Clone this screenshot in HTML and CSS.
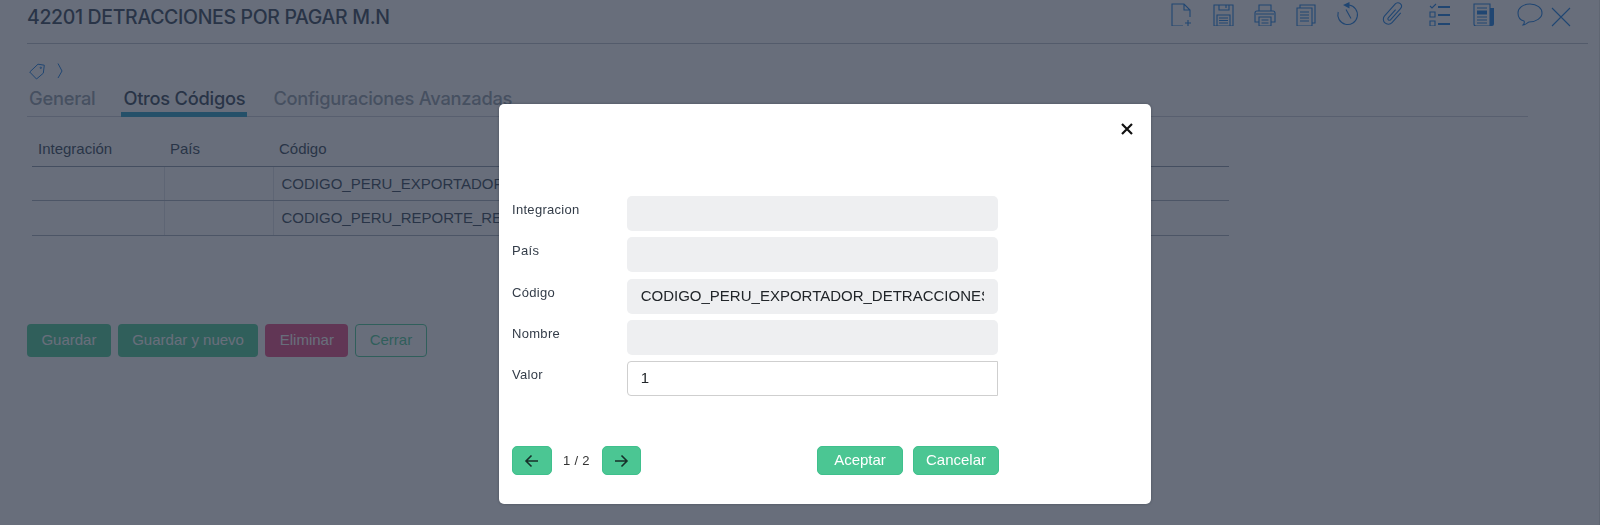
FILE: index.html
```html
<!DOCTYPE html>
<html lang="es">
<head>
<meta charset="utf-8">
<title>42201 DETRACCIONES POR PAGAR M.N</title>
<link rel="stylesheet" href="styles.css">
</head>
<body>
<main class="page">
  <header class="topbar">
    <h1 class="title">42201 DETRACCIONES POR PAGAR M.N</h1>
    <nav class="tools">
      <span class="tool"><svg width="24" height="24" viewBox="0 0 24 24" fill="none" stroke-width="1.1"><path d="M13 24H2V2h12l6 6v7M14 2v6h6M18 18v6M15 21h6"/></svg></span>
      <span class="tool"><svg width="24" height="24" viewBox="0 0 24 24" fill="none" stroke-width="1.1"><path d="M3 3h19v21H3zM8 3v5h10V3M15 3v3M6 13h13v11H6zM8 16h9M8 18.500h9M8 21h9"/></svg></span>
      <span class="tool"><svg width="24" height="24" viewBox="0 0 24 24" fill="none" stroke-width="1.1"><path d="M6 9V3h12v6M6 20H2V11q0-2 2-2h16q2 0 2 2v9h-4M6 15h12v9H6zM8.500 18h7M8.500 21h7M3 12h18"/></svg></span>
      <span class="tool"><svg width="24" height="24" viewBox="0 0 24 24" fill="none" stroke-width="1.1"><path d="M6 6V3h15v18h-3M3 6h15v18H3zM6 10h9M6 13h9M6 16h9M6 19h9"/></svg></span>
      <span class="tool"><svg width="24" height="24" viewBox="0 0 24 24" fill="none" stroke-width="1.1"><path d="M13 3a9.800 9.800 0 1 1-10.800 7M10 7.500l5 9"/><path class="solid" d="M13.500 0v6.500L7 3z"/></svg></span>
      <span class="tool tool-wide"><svg width="24" height="24" viewBox="0 0 24 24" fill="none" stroke-width="1.1"><path transform="rotate(42 12 12)" d="M17 6v13a5 5 0 0 1-10 0V3a3.500 3.500 0 0 1 7 0v15a1.500 1.500 0 0 1-3 0V7"/></svg></span>
      <span class="tool tool-wide"><svg width="24" height="24" viewBox="0 0 24 24" fill="none" stroke-width="1.1"><path d="M3 4l2 2 4-4M3 10h5v5H3zM3 19h5v5H3z"/><path stroke-width="2" d="M11 5h12M11 13h12M11 22h12"/></svg></span>
      <span class="tool tool-wide"><svg width="24" height="24" viewBox="0 0 24 24" fill="none" stroke-width="1.1"><path d="M2 2h16v22H4q-2 0-2-2zM5 6h10M5 15h10M5 18h10M5 21h10"/><path class="solid" d="M5 8.500h10v4H5zM18 6h4v16q0 2-2 2h-2z"/></svg></span>
      <span class="tool tool-wide"><svg width="26" height="24" viewBox="0 0 26 24" fill="none" stroke-width="1.1"><path d="M7 19c-4-1-6-4-6-8 0-5 5-9 12-9s12 4 12 9-6 9-13 9c-1 0-3 3-6 3 1-1 2-2 1-4z"/></svg></span>
      <span class="tool tool-close"><svg width="20" height="20" viewBox="0 0 20 20" fill="none" stroke-width="1.1"><path d="M1 1l18 18M19 1L1 19"/></svg></span>
    </nav>
  </header>

  <div class="crumbs">
    <svg width="16" height="17" viewBox="0 0 16 17" fill="none" stroke-width="1"><path d="M.700 9L9 1.200l6.300 1-1 8L7.500 16z"/><circle cx="11.800" cy="4.800" r=".7"/></svg>
    <svg class="crumb-sep" width="6" height="16" viewBox="0 0 6 16" fill="none" stroke-width="1"><path d="M1 .500L5 8l-4 7"/></svg>
  </div>

  <div class="tabs">
    <span class="tab">General</span>
    <span class="tab tab-active">Otros Códigos</span>
    <span class="tab">Configuraciones Avanzadas</span>
  </div>

  <table class="grid">
    <thead>
      <tr><th class="col-a">Integración</th><th class="col-b">País</th><th class="col-c">Código</th><th></th></tr>
    </thead>
    <tbody>
      <tr><td></td><td></td><td>CODIGO_PERU_EXPORTADOR_DETRACCIONES</td><td></td></tr>
      <tr><td></td><td></td><td>CODIGO_PERU_REPORTE_RETENCIONES</td><td></td></tr>
    </tbody>
  </table>

  <div class="actions">
    <button class="btn btn-green">Guardar</button>
    <button class="btn btn-green">Guardar y nuevo</button>
    <button class="btn btn-red">Eliminar</button>
    <button class="btn btn-outline">Cerrar</button>
  </div>
</main>

<div class="backdrop"></div>
<div class="scrollline"></div>

<section class="modal">
  <div class="modal-head">
    <svg class="modal-close" width="12" height="12" viewBox="0 0 12 12" fill="none" stroke-width="2.200"><path d="M1 1l10 10M11 1L1 11"/></svg>
  </div>
  <form class="form">
    <label class="row"><span class="lbl">Integracion</span><input class="field" disabled value=""></label>
    <label class="row"><span class="lbl">País</span><input class="field" disabled value=""></label>
    <label class="row"><span class="lbl">Código</span><input class="field" disabled value="CODIGO_PERU_EXPORTADOR_DETRACCIONES"></label>
    <label class="row"><span class="lbl">Nombre</span><input class="field" disabled value=""></label>
    <label class="row"><span class="lbl">Valor</span><input class="field field-edit" value="1"></label>
  </form>
  <div class="modal-foot">
    <button class="mbtn mbtn-nav"><svg width="15" height="14" viewBox="0 0 15 14" fill="none" stroke-width="1.600"><path d="M14 7H2M7.500 1.500L2 7l5.500 5.500"/></svg></button>
    <span class="pager">1 / 2</span>
    <button class="mbtn mbtn-nav"><svg width="15" height="14" viewBox="0 0 15 14" fill="none" stroke-width="1.600"><path d="M1 7h12M7.500 1.500L13 7l-5.500 5.500"/></svg></button>
    <button class="mbtn mbtn-text mbtn-first">Aceptar</button>
    <button class="mbtn mbtn-text">Cancelar</button>
  </div>
</section>
</body>
</html>
```

FILE: styles.css
```css
* { box-sizing: border-box; }
html, body { margin: 0; height: 525px; overflow: hidden; background: #fff; }
body { font-family: "Liberation Sans", Arial, sans-serif; color: #212529; }

.page { padding: 0 12px 0 27px; }

.topbar {
  display: flex;
  align-items: flex-start;
  justify-content: space-between;
  height: 44px;
  border-bottom: 1px solid #b8bec8;
}
.title {
  margin: 5px 0 0;
  font: 500 19.500px/24px Inter, "Open Sans", sans-serif;
  letter-spacing: -.35px;
  color: #2c3e50;
}
.tools { display: flex; margin-top: 2px; margin-right: 15px; }
.tool { display: flex; justify-content: center; width: 24px; height: 24px; margin-left: 17.500px; }
.tool:first-child { margin-left: 0; }
.tool-wide { margin-left: 21.500px; }
.tool-close { margin-left: 7.500px; padding-top: 5px; }
.tool svg, .crumbs svg { flex: none; stroke: #0f78e0; }
.tool .solid { fill: #0f78e0; stroke: none; }

.crumbs { display: flex; align-items: center; gap: 12px; height: 16px; margin: 19px 0 0 2px; }

.tabs {
  display: flex;
  height: 35px;
  margin: 3px 60px 0 0;
  padding-top: 5px;
  border-bottom: 1px solid #c9ced6;
  font: 500 18.300px/23px Inter, "Open Sans", sans-serif;
  color: #8d99a6;
  letter-spacing: -.25px;
}
.tab { padding: 0 2px; margin-right: 24px; height: 30px; }
.tab-active { color: #2c3e50; border-bottom: 5px solid #1f9cc4; }

.grid { width: 1197px; margin: 15px 0 0 5px; border-collapse: collapse; table-layout: fixed; font-size: 15px; color: #2c3e50; }
.col-a { width: 132px; }
.col-b { width: 109px; }
.col-c { width: 226px; }
.grid th { height: 34px; padding: 0 6px; text-align: left; font-weight: 400; border-bottom: 1px solid #8893a3; }
.grid td { height: 34.500px; padding: 0 8px; white-space: nowrap; overflow: hidden; border-bottom: 1px solid #a2abb8; border-left: 1px solid #dde1e6; }
.grid td:first-child { border-left: 0; }

.actions { display: flex; gap: 7px; margin-top: 88px; }
.btn {
  height: 33px;
  padding: 0 13.400px 1px;
  border: 1px solid transparent;
  border-radius: 4px;
  font: 400 15px "Liberation Sans", Arial, sans-serif;
  color: #fff;
}
.btn-green { background: #45cb95; }
.btn-red { background: #e8457f; }
.btn-outline { background: transparent; border-color: #45cb95; color: #45cb95; }

.backdrop { position: fixed; inset: 0; background: rgba(40, 48, 67, .7); }
.scrollline { position: fixed; top: 0; right: 0; bottom: 0; width: 1px; background: #5f6672; }

.modal {
  position: fixed;
  left: 499px;
  top: 104px;
  width: 652px;
  height: 400px;
  padding: 0 13px;
  border-radius: 5px;
  background: #fff;
  box-shadow: 0 0 3px rgba(20, 25, 35, .35);
}
.modal-head { display: flex; justify-content: flex-end; height: 92px; padding: 19px 5.500px 0 0; }
.modal-close { stroke: #111; }

.form { display: flex; flex-direction: column; gap: 6.300px; width: 486px; }
.row { display: flex; height: 35px; }
.lbl { flex: none; width: 114.700px; padding-top: 6px; font-size: 13px; line-height: 15px; color: #333c48; letter-spacing: .3px; }
.field {
  flex: 1;
  min-width: 0;
  height: 35px;
  padding: 0 14px 2px;
  border: 0;
  border-radius: 5px;
  background: #eeeff1;
  font: 400 15px "Liberation Sans", Arial, sans-serif;
  color: #212529;
  opacity: 1;
}
.field-edit { border: 1px solid #cfcfcf; border-radius: 4px 0 0 4px; background: #fff; padding: 0 13px 2px; }

.modal-foot { display: flex; align-items: center; margin-top: 50px; padding-right: 139px; }
.mbtn {
  display: flex;
  align-items: center;
  justify-content: center;
  height: 29px;
  padding: 0 0 2px;
  border: 1px solid #3fc08d;
  border-radius: 5px;
  background: #4bc693;
  color: #fff;
  font: 400 15px "Liberation Sans", Arial, sans-serif;
}
.mbtn-nav { width: 39.500px; padding: 0; }
.mbtn-nav svg { stroke: #17302a; }
.mbtn-text { width: 86px; margin-left: 10px; }
.mbtn-first { margin-left: auto; }
.pager { width: 50px; text-align: center; font-size: 13px; color: #333; letter-spacing: .3px; }
```
